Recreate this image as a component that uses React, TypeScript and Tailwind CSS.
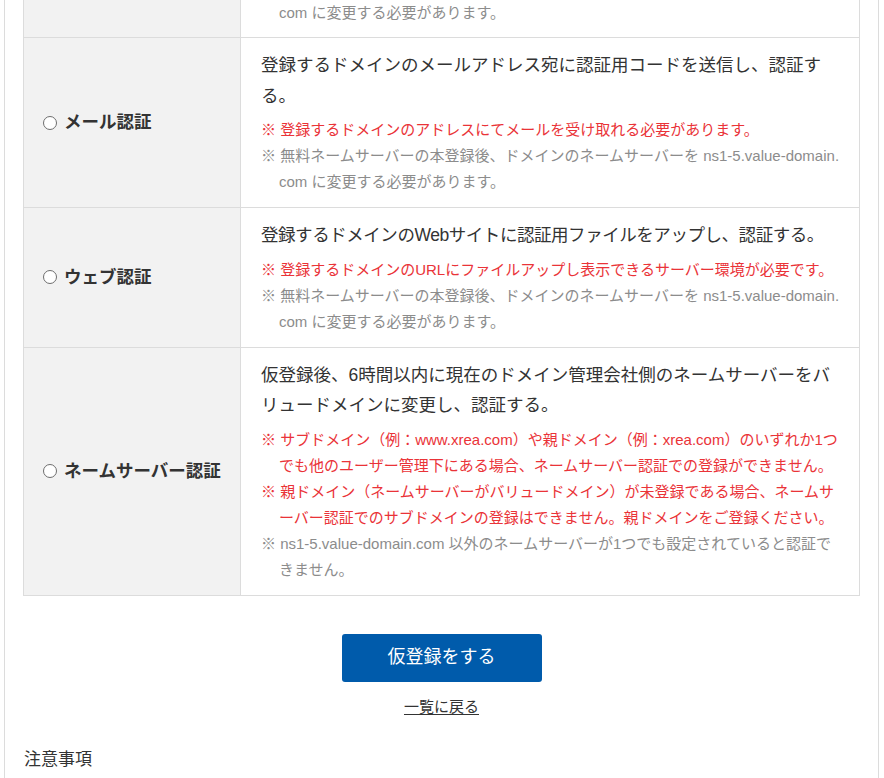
import React from "react"

const font = { fontFamily: '"Liberation Sans", "Noto Sans CJK JP", sans-serif' }

type Note = { tone: "red" | "gray"; text: string; pre?: boolean }

const nsNote: Note = {
  tone: "gray",
  pre: true,
  text: "無料ネームサーバーの本登録後、ドメインのネームサーバーを ns1-5.value-domain.\ncom に変更する必要があります。",
}

const rows: { label: string; body: string; tight?: boolean; notes: Note[] }[] = [
  {
    label: "メール認証",
    body: "登録するドメインのメールアドレス宛に認証用コードを送信し、認証する。",
    notes: [{ tone: "red", text: "登録するドメインのアドレスにてメールを受け取れる必要があります。" }, nsNote],
  },
  {
    label: "ウェブ認証",
    body: "登録するドメインのWebサイトに認証用ファイルをアップし、認証する。",
    tight: true,
    notes: [
      { tone: "red", text: "登録するドメインのURLにファイルアップし表示できるサーバー環境が必要です。" },
      nsNote,
    ],
  },
  {
    label: "ネームサーバー認証",
    body: "仮登録後、6時間以内に現在のドメイン管理会社側のネームサーバーをバリュードメインに変更し、認証する。",
    notes: [
      {
        tone: "red",
        text: "サブドメイン（例：www.xrea.com）や親ドメイン（例：xrea.com）のいずれか1つでも他のユーザー管理下にある場合、ネームサーバー認証での登録ができません。",
      },
      {
        tone: "red",
        text: "親ドメイン（ネームサーバーがバリュードメイン）が未登録である場合、ネームサーバー認証でのサブドメインの登録はできません。親ドメインをご登録ください。",
      },
      {
        tone: "gray",
        text: "ns1-5.value-domain.com 以外のネームサーバーが1つでも設定されていると認証できません。",
      },
    ],
  },
]

function NoteLine({ note }: { note: Note }) {
  return (
    <p
      className={`pl-[18px] -indent-[18px] text-[15px] leading-[26px] ${
        note.pre ? "whitespace-pre" : ""
      } ${note.tone === "red" ? "text-[#ea3338]" : "text-[#8c8c8c]"}`}
    >
      ※ {note.text}
    </p>
  )
}

export default function App() {
  return (
    <div className="min-h-screen bg-white text-[#333]" style={font}>
      <div className="ml-[4px] w-[875px] border-x border-[#dcdcdc] px-[18px] pb-[20px]">
        <table className="w-full table-fixed border-collapse">
          <tbody>
            <tr>
              <td className="w-[217px] bg-[#f2f2f2] border-x border-b border-[#dcdcdc]" />
              <td className="border-x border-b border-[#dcdcdc] px-[20px] pb-[11px]">
                <p className="pl-[18px] text-[15px] leading-[26px] text-[#8c8c8c]">
                  com に変更する必要があります。
                </p>
              </td>
            </tr>
            {rows.map((r) => (
              <tr key={r.label}>
                <td className="w-[217px] bg-[#f2f2f2] border border-[#dcdcdc] pl-[19px] pr-2 align-middle">
                  <label className="flex items-center gap-[7px] text-[17.5px] font-bold text-[#333]">
                    <span className="w-[14px] h-[14px] shrink-0 rounded-full border border-[#6e6e6e] bg-white" />
                    {r.label}
                  </label>
                </td>
                <td className="border border-[#dcdcdc] px-[20px] pt-[12px] pb-[12px] align-top">
                  <p
                    className={`text-[17.5px] leading-[30.5px] text-[#333] ${
                      r.tight ? "whitespace-nowrap tracking-[-0.45px]" : ""
                    }`}
                  >
                    {r.body}
                  </p>
                  <div className="mt-[6px]">
                    {r.notes.map((n, i) => (
                      <NoteLine key={i} note={n} />
                    ))}
                  </div>
                </td>
              </tr>
            ))}
          </tbody>
        </table>

        <div className="flex flex-col items-center">
          <button className="mt-[38px] w-[200px] h-[48px] rounded-[3px] bg-[#005bab] text-white text-[18px]">
            仮登録をする
          </button>
          <a href="#" className="mt-[13px] text-[15px] leading-[24px] text-[#333] underline underline-offset-2">
            一覧に戻る
          </a>
        </div>

        <h2 className="mt-[28px] pl-[1px] text-[17px] leading-[26px] text-[#333]">注意事項</h2>
      </div>
    </div>
  )
}
